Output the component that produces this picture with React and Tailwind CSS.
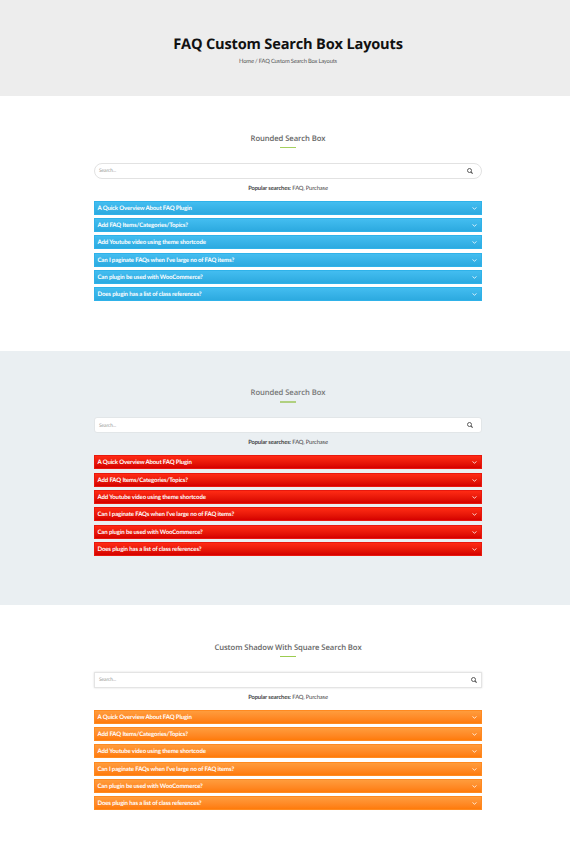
import React from 'react';

const questions = [
  'A Quick Overview About FAQ Plugin',
  'Add FAQ Items/Categories/Topics?',
  'Add Youtube video using theme shortcode',
  "Can I paginate FAQs when I've large no of FAQ items?",
  'Can plugin be used with WooCommerce?',
  'Does plugin has a list of class references?',
];

function SearchIcon() {
  return (
    <svg className="h-[6px] w-[6px] text-[#555]" viewBox="0 0 12 12" fill="none" stroke="currentColor" strokeWidth="1.9">
      <circle cx="5" cy="5" r="4" />
      <path d="M7.8 7.8 11.3 11.3" strokeWidth="2.4" />
    </svg>
  );
}

function Chevron() {
  return (
    <svg className="mt-[1px] h-[3px] w-[5px]" viewBox="0 0 10 6" fill="none" stroke="#ffffffdd" strokeWidth="1.8">
      <path d="M1 1 5 4.4 9 1" />
    </svg>
  );
}

function FaqSection({ title, className, headingClass, lineClass, boxClass, barClass }) {
  return (
    <section className={`flex flex-col items-center ${className}`}>
      <h2 className={`h-[10px] whitespace-nowrap font-['Open_Sans',sans-serif] text-[7.7px] leading-[12.4px] font-semibold tracking-[-0.09px] ${headingClass}`}>{title}</h2>
      <div className={`mt-[4px] h-[1.5px] w-[16px] ${lineClass}`} />
      <div className={`mt-[14.5px] flex h-[16px] w-[388px] items-center justify-between border bg-white pl-[4px] ${boxClass}`}>
        <span className="pt-[1.6px] text-[5px] leading-[6px] tracking-[-0.14px] text-[#999]">Search...</span>
        <SearchIcon />
      </div>
      <p className="mt-[5px] h-[8px] whitespace-nowrap text-[5.8px] leading-[10.4px] tracking-[-0.13px] text-[#444]">
        <b>Popular searches:</b> FAQ, Purchase
      </p>
      <ul className="mt-[9px] flex w-[388px] flex-col gap-[3.4px]">
        {questions.map((question) => (
          <li key={question} className={`flex h-[14px] items-center justify-between border pr-[4px] pl-[2.5px] ${barClass}`}>
            <span className="whitespace-nowrap pt-[2px] text-[6.1px] leading-[8px] font-bold tracking-[-0.16px] text-white">{question}</span>
            <Chevron />
          </li>
        ))}
      </ul>
    </section>
  );
}

export default function App() {
  return (
    <main className="h-[855px] w-[570px] overflow-hidden bg-white font-['Lato',sans-serif] [text-rendering:geometricPrecision]">
      <header className="flex h-[96px] flex-col items-center bg-[#ededed] pt-[34px]">
        <h1 className="h-[20px] whitespace-nowrap pl-[6px] font-['Open_Sans',sans-serif] text-[14.6px] leading-[20px] font-bold tracking-[-0.18px] text-[#111]">
          FAQ Custom Search Box Layouts
        </h1>
        <p className="mt-[3px] h-[8px] whitespace-nowrap pl-[6px] text-[5.8px] leading-[9px] tracking-[-0.19px] text-[#555]">Home / FAQ Custom Search Box Layouts</p>
      </header>
      <FaqSection
        title="Rounded Search Box"
        className="h-[254.5px] pt-[36.5px] pl-[6px]"
        headingClass="text-[#666]"
        lineClass="bg-[#a4d060]"
        boxClass="rounded-full border-[#e2e2e2] pr-[8px]"
        barClass="border-[#2fb2e9] bg-linear-to-b from-[#43bdf0] to-[#2caae0]"
      />
      <FaqSection
        title="Rounded Search Box"
        className="h-[254px] bg-[#eaeff2] pt-[36.7px] pl-[6px]"
        headingClass="text-[#777]"
        lineClass="bg-[#b0d080]"
        boxClass="rounded-[3px] border-[#e2e6e8] pr-[8px]"
        barClass="border-[#e8180e] bg-linear-to-b from-[#ff2a14] to-[#d50000]"
      />
      <FaqSection
        title="Custom Shadow With Square Search Box"
        className="h-[250.5px] pt-[37px] pl-[6px]"
        headingClass="text-[#666]"
        lineClass="bg-[#9ccc50]"
        boxClass="border-[#e4e4e4] pr-[4px] shadow-[0_0_2px_#ddd]"
        barClass="border-[#ff8a20] bg-linear-to-b from-[#ff9c3c] to-[#ff7b08]"
      />
    </main>
  );
}
